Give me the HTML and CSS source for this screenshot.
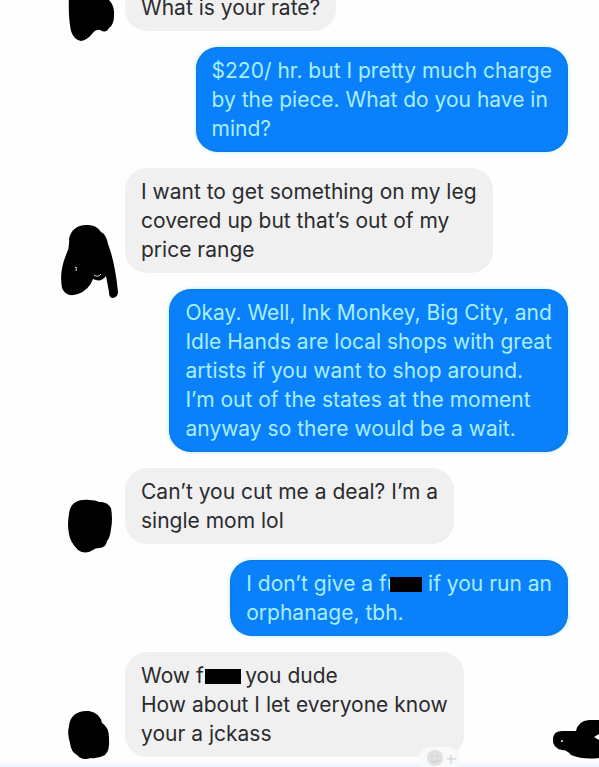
FILE: index.html
```html
<!DOCTYPE html>
<html lang="en">
<head>
  <meta charset="UTF-8">
  <meta name="viewport" content="width=device-width, initial-scale=1.0">
  <title>Messages</title>
  <link rel="stylesheet" href="styles.css">
</head>
<body>
  <main class="chat">
    <div class="row">
      <svg class="avatar" viewBox="0 0 64 80" aria-hidden="true">
        <path d="M11 18 Q10 40 13 54 Q16 63 23 64 Q29 63 34 57 Q38 52 42 53 Q48 57 51 51 Q56 48 56 38 Q57 28 49 21 L48 10 H12Z"/>
      </svg>
      <p class="bubble">What is your rate?</p>
    </div>

    <div class="row sent">
      <p class="bubble">$220/ hr. but I pretty much charge<br>by the piece. What do you have in<br>mind?</p>
    </div>

    <div class="row">
      <svg class="avatar" viewBox="0 0 64 80" aria-hidden="true">
        <path d="M11 20 C13 11 19 6 28 6 Q38 5 43 13 Q48 15 50 25 Q57 43 60 73 Q60 78 55 79 Q51 79 51 73 L48 57 Q43 64 35 60 Q31 71 20 75 Q8 79 4 69 Q1 53 8 36 Q12 28 11 20Z"/>
        <path class="gap" d="M17 49 q2 -3 1 3 M36 56 q4 3 7 -1"/>
      </svg>
      <p class="bubble">I want to get something on my leg<br>covered up but that’s out of my<br>price range</p>
    </div>

    <div class="row sent">
      <p class="bubble">Okay. Well, Ink Monkey, Big City, and<br>Idle Hands are local shops with great<br>artists if you want to shop around.<br>I’m out of the states at the moment<br>anyway so there would be a wait.</p>
    </div>

    <div class="row">
      <svg class="avatar" viewBox="0 0 64 80" aria-hidden="true">
        <path d="M11 24 C12 13 20 9 31 10 Q38 10 41 12 Q49 11 53 18 Q55 29 53 39 Q52 48 49 51 Q48 58 41 58 Q37 58 35 60 Q27 65 20 60 Q12 52 11 44 Q9 35 11 24Z"/>
      </svg>
      <p class="bubble">Can’t you cut me a deal? I’m a<br>single mom lol</p>
    </div>

    <div class="row sent">
      <p class="bubble">I don’t give a fu<span class="bar"></span> if you run an<br>orphanage, tbh.</p>
    </div>

    <div class="row">
      <svg class="avatar" viewBox="0 0 64 80" aria-hidden="true">
        <path d="M11 23 C12 12 20 7 31 8 Q42 10 44 20 Q51 24 51 35 Q52 48 47 52 Q40 56 33 55 Q24 58 19 52 Q13 49 12 40 Q9 30 11 23Z"/>
      </svg>
      <p class="bubble">Wow fu<span class="bar wide"></span>you dude<br>How about I let everyone know<br>your a jckass</p>
    </div>

    <svg class="react" viewBox="0 0 40 20" aria-hidden="true">
      <rect class="pill" x="0" y="0" width="40" height="24" rx="10"/>
      <circle class="face" cx="16" cy="11" r="8"/>
      <path class="line" d="M12 9h2M18 9h2M12 13q4 4 8 0M28 12h9M32 8v9"/>
    </svg>
    <svg class="scribble" viewBox="0 0 48 48" aria-hidden="true">
      <path d="M2 19 Q3 12 11 12 H25 Q27 2 38 1 H48 V39 Q32 41 20 36 Q16 31 11 31 Q1 29 2 19Z"/>
      <path class="hole" d="M43 18 L48 15 V21Z"/>
      <circle class="hole" cx="11" cy="22" r="1"/>
    </svg>
  </main>
</body>
</html>
```
FILE: styles.css
```css
body {
  margin: 0;
  background: #fefefe;
  font-family: Inter, "Liberation Sans", sans-serif;
  font-size: 21px;
  line-height: 29px;
  color: #2b2b2d;
}
.chat {
  position: relative;
  display: flex;
  flex-direction: column;
  gap: 16px;
  margin-top: -16px;
  padding-bottom: 10px;
  overflow: hidden;
  background: linear-gradient(to top, #e9f3fb, #fefefe 6px);
}
.row {
  display: flex;
  align-items: flex-end;
  padding-left: 58px;
  padding-right: 31px;
}
.sent {
  justify-content: flex-end;
}
.bubble {
  margin: 0;
  padding: 9px 16px;
  border-radius: 22px;
  background: #f0f0f1;
  white-space: nowrap;
}
.sent .bubble {
  background: #0a80fb;
  color: #a9efff;
  box-shadow: inset 0 0 2px #17689f, 0 0 4px #b5efff;
}
.avatar {
  flex: none;
  width: 64px;
  height: 80px;
  margin-top: -33px;
  margin-right: 3px;
  margin-bottom: -26px;
}
.gap {
  fill: none;
  stroke: #ddd;
}

/* blacked-out part of a word */
.bar {
  display: inline-block;
  width: 32px;
  height: 15px;
  margin-left: -9px;
  background: #000;
  vertical-align: -1px;
}
.wide {
  width: 36px;
  margin-right: 4px;
  margin-left: -11px;
}

.react {
  position: absolute;
  left: 70%;
  bottom: 0;
  width: 40px;
  height: 20px;
}
.pill {
  fill: #f8f9fa;
}
.face {
  fill: #dfe0e1;
}
.line {
  fill: none;
  stroke: #c9cacc;
}
.scribble {
  position: absolute;
  right: 0;
  bottom: 0;
  width: 48px;
  height: 48px;
}
.hole {
  fill: #fff;
}
```
